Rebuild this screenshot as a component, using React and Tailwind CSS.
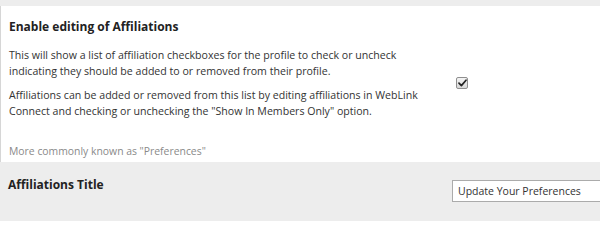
import React from "react";

const font = { fontFamily: "'Open Sans', 'Noto Sans', sans-serif" };

function FakeCheckbox() {
  return (
    <span className="flex h-[12px] w-[12px] items-center justify-center rounded-[2px] border border-[#8f8f8f] bg-gradient-to-b from-[#f4f4f4] to-[#d8d8d8]">
      <svg width="9" height="8" viewBox="0 0 9 8">
        <path d="M1 4.2 L3.4 6.6 L8 1.2" fill="none" stroke="#222" strokeWidth="1.7" strokeLinecap="round" strokeLinejoin="round" />
      </svg>
    </span>
  );
}

export default function App() {
  return (
    <div style={font} className="h-[221px] w-[600px] overflow-hidden bg-[#ededed] pt-[6px] text-[#333]">
      {/* Enable editing panel */}
      <div className="border-l border-[#d6d6d6] bg-white pl-2 pt-3 pb-[3px]">
        <h3 className="text-[12px] font-bold leading-[18px] text-[#222]">Enable editing of Affiliations</h3>
        <div className="mt-[11px] flex">
          <div className="w-[447px] shrink-0 text-[10.6px] leading-4">
            <p>
              This will show a list of affiliation checkboxes for the profile to check or uncheck<br />
              indicating they should be added to or removed from their profile.
            </p>
            <p className="mt-2">
              Affiliations can be added or removed from this list by editing affiliations in WebLink<br />
              Connect and checking or unchecking the "Show In Members Only" option.
            </p>
          </div>
          <div className="flex items-center">
            <FakeCheckbox />
          </div>
        </div>
        <p className="mt-6 text-[10.4px] leading-4 text-[#8a8a8a]">More commonly known as "Preferences"</p>
      </div>

      {/* Title row */}
      <div className="flex pl-2 pt-[14px]">
        <div className="w-[444px] shrink-0 text-[12px] font-bold leading-[18px] text-[#222]">Affiliations Title</div>
        <input
          className="mt-1 h-[22px] w-[160px] shrink-0 border border-[#ababab] bg-white px-[5px] text-[10.5px] text-[#333] outline-none"
          style={font}
          defaultValue="Update Your Preferences"
        />
      </div>
    </div>
  );
}
